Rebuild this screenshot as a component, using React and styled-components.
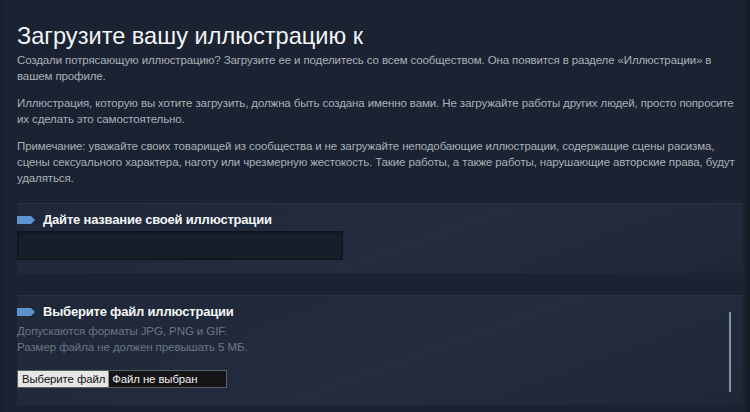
import React from "react";
import styled, { createGlobalStyle } from "styled-components";

const GlobalStyle = createGlobalStyle`
  html, body {
    margin: 0;
    padding: 0;
    background: #1b2232;
  }
  body {
    font-family: "Liberation Sans", Arial, sans-serif;
  }
`;

const Page = styled.div`
  width: 750px;
  height: 412px;
  overflow: hidden;
  box-sizing: border-box;
  padding: 0 5px 0 4px;
  background: linear-gradient(90deg, #171d2a 0, #1b2232 4px, #1b2232 745px, #151a26 746px);
`;

const Content = styled.div`
  padding: 22px 0 0 13px;
`;

const Title = styled.h1`
  margin: 0 0 2px;
  font-size: 23.6px;
  font-weight: normal;
  line-height: 28px;
  color: #f2f4f6;
`;

const Para = styled.p`
  margin: 0 0 11px;
  font-size: 11.5px;
  letter-spacing: -0.12px;
  line-height: 16px;
  white-space: nowrap;
  color: #a9b0b8;
`;

const Section = styled.section`
  margin-top: ${(p) => p.$top}px;
  height: ${(p) => p.$height}px;
  box-sizing: border-box;
  padding: 8px 0 0 0;
  margin-right: 2px;
  border-top: 1px solid #2a3447;
  background: linear-gradient(160deg, #1f2738 0%, #232d3f 55%, #1f2737 100%);
  position: relative;
`;

const Heading = styled.h3`
  display: flex;
  align-items: center;
  gap: 8px;
  margin: 0;
  font-size: 13px;
  font-weight: bold;
  letter-spacing: -0.2px;
  line-height: 16px;
  color: #f4f6f8;
`;

const Tag = styled.span`
  display: block;
  width: 18px;
  height: 8px;
  background: #5b94cf;
  clip-path: polygon(0 0, 78% 0, 100% 50%, 78% 100%, 0 100%);
`;

const TextField = styled.div`
  margin-top: 3px;
  width: 326px;
  height: 29px;
  box-sizing: border-box;
  background: #181e29;
  border: 1px solid #0f131b;
  box-shadow: inset 0 1px 2px #10141c;
`;

const Hint = styled.div`
  margin-top: 3px;
  font-size: 11.5px;
  letter-spacing: -0.08px;
  line-height: 16px;
  color: #6c7583;
`;

const FileInput = styled.div`
  display: inline-flex;
  margin-top: 15px;
  width: 210px;
  height: 18px;
  box-sizing: border-box;
  border: 1px solid #5a5f66;
  background: #151517;
  font-size: 11.4px;
  letter-spacing: -0.1px;
  line-height: 16px;
`;

const FileButton = styled.span`
  padding: 0 3px 0 4px;
  background: #e6e6e6;
  color: #111;
  border-right: 1px solid #8a8a8a;
`;

const FileName = styled.span`
  padding-left: 3px;
  color: #f0f0f0;
`;

const Scrollbar = styled.div`
  position: absolute;
  right: 12px;
  top: 16px;
  width: 2px;
  height: 80px;
  background: #8693a4;
`;

export default function App() {
  return (
    <Page>
      <GlobalStyle />
      <Content>
        <Title>Загрузите вашу иллюстрацию к</Title>
        <Para>
          Создали потрясающую иллюстрацию? Загрузите ее и поделитесь со всем
          сообществом. Она появится в разделе «Иллюстрации» в<br />
          вашем профиле.
        </Para>
        <Para>
          Иллюстрация, которую вы хотите загрузить, должна быть создана именно
          вами. Не загружайте работы других людей, просто попросите<br />
          их сделать это самостоятельно.
        </Para>
        <Para>
          Примечание: уважайте своих товарищей из сообщества и не загружайте
          неподобающие иллюстрации, содержащие сцены расизма,<br />
          сцены сексуального характера, наготу или чрезмерную жестокость. Такие
          работы, а также работы, нарушающие авторские права, будут<br />
          удаляться.
        </Para>

        <Section $top={17} $height={70}>
          <Heading>
            <Tag />
            Дайте название своей иллюстрации
          </Heading>
          <TextField />
        </Section>

        <Section $top={22} $height={110}>
          <Heading>
            <Tag />
            Выберите файл иллюстрации
          </Heading>
          <Hint>
            Допускаются форматы JPG, PNG и GIF.
            <br />
            Размер файла не должен превышать 5 МБ.
          </Hint>
          <FileInput>
            <FileButton>Выберите файл</FileButton>
            <FileName>Файл не выбран</FileName>
          </FileInput>
          <Scrollbar />
        </Section>
      </Content>
    </Page>
  );
}
